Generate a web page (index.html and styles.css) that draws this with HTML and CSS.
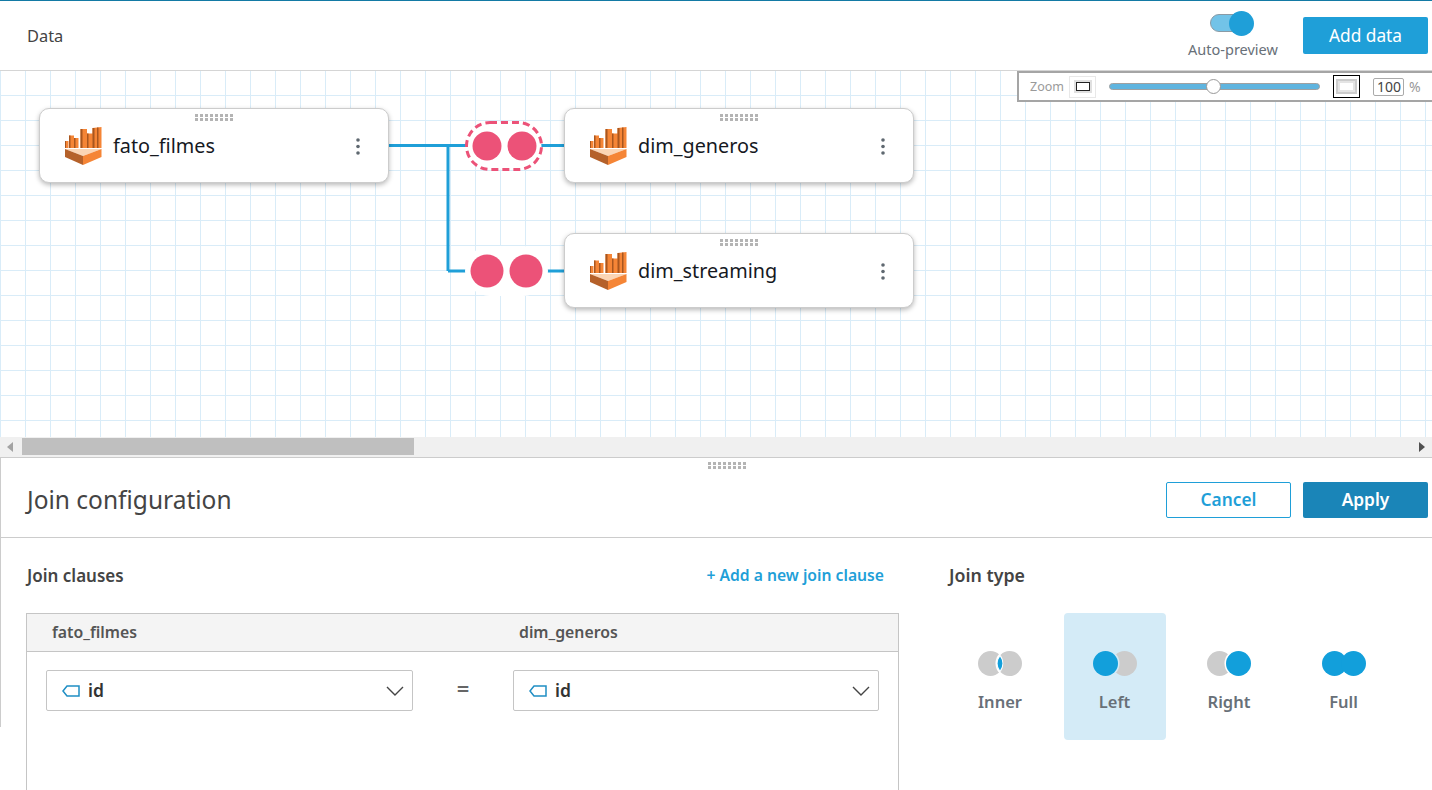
FILE: index.html
```html
<!DOCTYPE html>
<html lang="en">
<head>
  <meta charset="UTF-8" />
  <title>Data - Join configuration</title>
  <link rel="stylesheet" href="styles.css">
</head>
<body>
  <!-- shared icons -->
  <svg class="defs" width="0" height="0">
    <symbol id="cube" viewBox="0 0 37 38">
      <path fill="#f58536" d="M0 14h3.500v7H0zM4 8.500h5V21H4zM9 11h4.500v10H9zM15.500 2H22v19h-6.500zM22 6.500h5.500V21H22zM27.500 1l9-1v21h-9z"/>
      <path fill="#a8561f" d="M0 14h1v7H0zM4 8.500h1.500V21H4zM9 11h1.500v10H9zM15.500 2h2v19h-2zM22 6.500h1.500V21H22zM27.500 1h2v20h-2zM32 .5h1.500V21H32z"/>
      <path fill="#fbd5b5" d="M0 22h36.500L18 29z"/>
      <path fill="#b5612a" d="M0 22v8l18 8v-9z"/>
      <path fill="#f58536" d="M36.500 22v8L18 38v-9z"/>
    </symbol>
    <symbol id="kebab" viewBox="0 0 4 17">
      <circle cx="2" cy="2" r="1.800"/><circle cx="2" cy="8.500" r="1.800"/><circle cx="2" cy="15" r="1.800"/>
    </symbol>
    <symbol id="chevron" viewBox="0 0 18 10">
      <path d="M1 1l8 8 8-8" fill="none" stroke="#444" stroke-width="1.400"/>
    </symbol>
    <symbol id="tag" viewBox="0 0 18 12">
      <path d="M17 1H5L1 6l4 5h12z" fill="none" stroke="#1f8ec4" stroke-width="1.500"/>
    </symbol>
  </svg>

  <header class="top-bar">
    <span class="top-title">Data</span>
    <div class="auto-preview">
      <span class="toggle"><span class="toggle-knob"></span></span>
      <span class="toggle-label">Auto-preview</span>
    </div>
    <button class="btn btn-primary">Add data</button>
  </header>

  <section class="canvas">
    <svg class="links" width="1432" height="367" viewBox="0 70 1432 367">
      <path d="M388 145.500H565M448 145.500V271M448 271H565" fill="none" stroke="#1f9fd8" stroke-width="3"/>
      <rect x="466.500" y="122.500" width="75" height="47" rx="23.500" fill="#fff" stroke="#ec5278" stroke-width="3" stroke-dasharray="7 4"/>
      <circle cx="487" cy="146" r="14.500" fill="#ec5278"/>
      <circle cx="522" cy="146" r="14.500" fill="#ec5278"/>
      <rect x="465" y="246" width="83" height="50" rx="25" fill="#fff"/>
      <circle cx="487" cy="271" r="16.500" fill="#ec5278"/>
      <circle cx="526" cy="271" r="16.500" fill="#ec5278"/>
    </svg>

    <div class="node node-fato">
      <span class="grip"></span>
      <svg class="node-icon"><use href="#cube"/></svg>
      <span class="node-name">fato_filmes</span>
      <svg class="kebab"><use href="#kebab"/></svg>
    </div>
    <div class="node node-generos">
      <span class="grip"></span>
      <svg class="node-icon"><use href="#cube"/></svg>
      <span class="node-name">dim_generos</span>
      <svg class="kebab"><use href="#kebab"/></svg>
    </div>
    <div class="node node-streaming">
      <span class="grip"></span>
      <svg class="node-icon"><use href="#cube"/></svg>
      <span class="node-name">dim_streaming</span>
      <svg class="kebab"><use href="#kebab"/></svg>
    </div>

    <div class="zoom-box">
      <span class="zoom-label">Zoom</span>
      <span class="zoom-small"><span></span></span>
      <span class="slider"><span class="slider-knob"></span></span>
      <span class="zoom-large"><span></span></span>
      <span class="zoom-input">100</span>
      <span class="zoom-pct">%</span>
    </div>
  </section>

  <div class="scrollbar">
    <span class="arrow-left"></span>
    <span class="thumb"></span>
    <span class="arrow-right"></span>
  </div>

  <section class="panel">
    <span class="grip panel-grip"></span>
    <div class="panel-head">
      <h1>Join configuration</h1>
      <div class="panel-actions">
        <button class="btn btn-outline">Cancel</button>
        <button class="btn btn-apply">Apply</button>
      </div>
    </div>
    <div class="panel-body">
      <div class="clauses">
        <div class="clauses-head">
          <h2>Join clauses</h2>
          <a class="add-clause">+ Add a new join clause</a>
        </div>
        <div class="clause-table">
          <div class="clause-cols">
            <span>fato_filmes</span>
            <span>dim_generos</span>
          </div>
          <div class="clause-row">
            <div class="field">
              <svg class="tag"><use href="#tag"/></svg>
              <span class="field-value">id</span>
              <svg class="chevron"><use href="#chevron"/></svg>
            </div>
            <span class="equals">=</span>
            <div class="field">
              <svg class="tag"><use href="#tag"/></svg>
              <span class="field-value">id</span>
              <svg class="chevron"><use href="#chevron"/></svg>
            </div>
          </div>
        </div>
      </div>
      <div class="join-type">
        <h2>Join type</h2>
        <div class="types">
          <div class="type">
            <svg class="venn" viewBox="0 0 44 25">
              <circle cx="12.500" cy="12.500" r="12.500" fill="#ccc"/>
              <circle cx="31.500" cy="12.500" r="14" fill="#fff"/>
              <circle cx="31.500" cy="12.500" r="12.500" fill="#ccc"/>
              <path d="M22 3.500a14 14 0 0 1 0 18 14 14 0 0 1 0-18z" fill="#fff"/>
              <path d="M22 5.500a11.500 11.500 0 0 1 0 14 11.500 11.500 0 0 1 0-14z" fill="#129fdb"/>
            </svg>
            <span>Inner</span>
          </div>
          <div class="type type-on">
            <svg class="venn" viewBox="0 0 44 25">
              <circle cx="31.500" cy="12.500" r="12.500" fill="#ccc"/>
              <circle cx="12.500" cy="12.500" r="14" fill="#d4ebf7"/>
              <circle cx="12.500" cy="12.500" r="12.500" fill="#129fdb"/>
            </svg>
            <span>Left</span>
          </div>
          <div class="type">
            <svg class="venn" viewBox="0 0 44 25">
              <circle cx="12.500" cy="12.500" r="12.500" fill="#ccc"/>
              <circle cx="31.500" cy="12.500" r="14" fill="#fff"/>
              <circle cx="31.500" cy="12.500" r="12.500" fill="#129fdb"/>
            </svg>
            <span>Right</span>
          </div>
          <div class="type">
            <svg class="venn" viewBox="0 0 44 25">
              <circle cx="12.500" cy="12.500" r="12.500" fill="#129fdb"/>
              <circle cx="31.500" cy="12.500" r="12.500" fill="#129fdb"/>
            </svg>
            <span>Full</span>
          </div>
        </div>
      </div>
    </div>
  </section>
</body>
</html>
```
FILE: styles.css
```css
* { box-sizing: border-box; margin: 0; padding: 0; }
body {
  font-family: 'Noto Sans', 'Open Sans', sans-serif;
  background: #fff;
  color: #444;
  height: 790px;
  overflow: hidden;
}
.defs { position: absolute; }
.top-bar {
  height: 70px;
  border-top: 1px solid #137aa5;
  display: flex;
  align-items: center;
  padding: 0 4px 0 27px;
}
.top-title {
  font-size: 16.400px;
  color: #444;
  flex: 1;
}
.auto-preview {
  display: flex;
  flex-direction: column;
  align-items: center;
  width: 92px;
  margin-right: 24px;
  margin-top: 2px;
}
.toggle {
  display: block;
  position: relative;
  width: 36px;
  height: 18px;
  margin-right: 10px;
  border-radius: 9px;
  background: #72c3e8;
  border: 1px solid #8a9aa5;
}
.toggle-knob {
  position: absolute;
  right: -9px;
  top: -4.500px;
  width: 25px;
  height: 25px;
  border-radius: 50%;
  background: #1f9fd8;
}
.toggle-label {
  font-size: 14.500px;
  color: #687078;
  margin-top: 7px;
  white-space: nowrap;
}
.btn {
  font-family: inherit;
  font-size: 17.300px;
  width: 125px;
  height: 37px;
  border-radius: 2px;
  border: none;
  cursor: pointer;
}
.btn-primary {
  background: #1f9fd8;
  color: #fff;
}
.btn-outline {
  background: #fff;
  color: #1f9fd8;
  border: 1px solid #1f9fd8;
  font-weight: 600;
}
.btn-apply {
  background: #1a85b8;
  color: #fff;
  font-weight: 600;
}

/* canvas */
.canvas {
  position: relative;
  height: 367px;
  background-color: #fff;
  background-image:
    linear-gradient(to right, #d9ecf8 1px, transparent 1px),
    linear-gradient(to bottom, #d9ecf8 1px, transparent 1px);
  background-size: 25px 25px;
  border-top: 1px solid #d5d5d5;
  background-position: 0 -1px;
  overflow: hidden;
}
.links {
  position: absolute;
  left: 0;
  top: -1px;
}
.node {
  position: absolute;
  left: 39px;
  width: 350px;
  height: 75px;
  background: #fff;
  border: 1px solid #ccc;
  border-radius: 10px;
  box-shadow: 0 2px 5px rgba(0, 0, 0, 0.28);
  display: flex;
  align-items: center;
  padding: 1px 28px 0 25px;
}
.node-fato { top: 37px; }
.node-generos { top: 37px; left: 564px; }
.node-streaming { top: 162px; left: 564px; }
.grip {
  position: absolute;
  left: 155px;
  top: 5px;
  width: 39px;
  height: 7px;
  background-image: radial-gradient(circle at 1.500px 1.500px, #b4b4b4 1.500px, transparent 1.700px);
  background-size: 5px 4px;
}
.node-icon {
  width: 37px;
  height: 38px;
  flex: none;
}
.node-name {
  font-size: 19.800px;
  color: #16191f;
  margin-left: 11px;
  flex: 1;
  padding-bottom: 2px;
}
.kebab {
  width: 4px;
  height: 17px;
  fill: #5f6870;
}

/* zoom box */
.zoom-box {
  position: absolute;
  left: 1017px;
  top: 0;
  width: 430px;
  height: 31px;
  background: #fff;
  border: 2px solid #a5a5a5;
  display: flex;
  align-items: center;
  padding-left: 11px;
}
.zoom-label {
  font-size: 12.500px;
  color: #9a9a9a;
  width: 39px;
}
.zoom-small {
  width: 27px;
  height: 22px;
  border: 1px solid #e8e8e8;
  display: flex;
  align-items: center;
  justify-content: center;
}
.zoom-small span {
  width: 14px;
  height: 9px;
  border: 1.500px solid #222;
  outline: 2px solid #e0e0e0;
}
.slider {
  position: relative;
  width: 211px;
  height: 7px;
  margin-left: 13px;
  background: #5fb4df;
  border: 1px solid #a0a0a0;
  border-radius: 4px;
}
.slider-knob {
  position: absolute;
  left: 96px;
  top: -5.500px;
  width: 15px;
  height: 15px;
  border-radius: 50%;
  background: #fff;
  border: 1px solid #999;
}
.zoom-large {
  width: 27px;
  height: 23px;
  margin-left: 13px;
  border: 1px solid #000;
  display: flex;
  align-items: center;
  justify-content: center;
}
.zoom-large span {
  width: 17px;
  height: 11px;
  border: 2px solid #e4e4e4;
  outline: 2px solid #ccc;
}
.zoom-input {
  width: 31px;
  height: 18px;
  margin-left: 13px;
  border: 1px solid #aaa;
  border-radius: 2px;
  font-size: 14px;
  color: #444;
  text-align: right;
  line-height: 16px;
  padding-right: 2px;
}
.zoom-pct {
  font-size: 14px;
  color: #999;
  margin-left: 5px;
}

/* scrollbar under the canvas */
.scrollbar {
  height: 20px;
  background: #f0f0f0;
  position: relative;
  display: flex;
  align-items: center;
  justify-content: space-between;
  padding: 0 7px;
}
.arrow-left {
  border: 5px solid transparent;
  border-left: none;
  border-right: 6px solid #a3a3a3;
}
.arrow-right {
  border: 5px solid transparent;
  border-right: none;
  border-left: 6px solid #505050;
}
.thumb {
  position: absolute;
  left: 22px;
  top: 1px;
  width: 392px;
  height: 17px;
  background: #bfbfbf;
}

/* join panel */
.panel {
  position: relative;
  height: 270px;
  border-top: 1px solid #ccc;
  border-left: 1px solid #ccc;
}
.panel-grip {
  left: 707px;
  top: 4px;
}
.panel-head {
  height: 80px;
  border-bottom: 1px solid #ccc;
  margin-left: -1px;
  display: flex;
  align-items: center;
  justify-content: space-between;
  padding: 4px 4px 0 27px;
}
.panel-head h1 {
  font-size: 24.500px;
  font-weight: 400;
  color: #444;
}
.panel-actions {
  display: flex;
  gap: 12px;
}
.panel-actions .btn { height: 36px; }
.panel-body {
  display: flex;
  padding: 25px 0 0 25px;
}
.panel-body h2 {
  font-size: 17px;
  font-weight: 600;
  color: #444;
}
.clauses { width: 873px; }
.clauses h2 { margin-left: 1px; }
.clauses-head {
  display: flex;
  justify-content: space-between;
  align-items: center;
  height: 24px;
  padding-right: 15px;
}
.add-clause {
  font-size: 15.700px;
  font-weight: 600;
  color: #1f9fd8;
}
.clause-table {
  margin-top: 26px;
  height: 300px;
  border: 1px solid #c5c5c5;
}
.clause-cols {
  height: 38px;
  background: #f4f4f4;
  border-bottom: 1px solid #c5c5c5;
  display: grid;
  grid-template-columns: 467px 1fr;
  align-items: center;
  padding: 0 0 2px 25px;
  font-size: 15.800px;
  font-weight: 600;
  color: #555;
}
.clause-row {
  display: grid;
  grid-template-columns: 367px 100px 366px;
  align-items: center;
  padding: 18px 0 0 19px;
}
.field {
  height: 41px;
  border: 1px solid #c5c5c5;
  border-radius: 2px;
  display: flex;
  align-items: center;
  padding: 0 8px 0 15px;
}
.tag {
  width: 18px;
  height: 12px;
  flex: none;
}
.field-value {
  font-size: 17.500px;
  font-weight: 600;
  color: #333;
  margin-left: 8px;
  flex: 1;
  padding-bottom: 2px;
}
.chevron {
  width: 18px;
  height: 10px;
}
.equals {
  text-align: center;
  font-size: 22px;
  font-weight: 600;
  color: #666;
  padding-bottom: 6px;
}
.join-type {
  margin-left: 50px;
}
.join-type h2 {
  height: 24px;
  line-height: 24px;
  font-size: 17.800px;
}
.types {
  display: flex;
  gap: 12.500px;
  margin-top: 26px;
}
.type {
  width: 102px;
  height: 127px;
  border-radius: 4px;
  display: flex;
  flex-direction: column;
  align-items: center;
  padding-top: 38px;
  font-size: 16.500px;
  font-weight: 600;
  color: #687078;
}
.type-on { background: #d4ebf7; }
.venn {
  width: 44px;
  height: 25px;
  margin-bottom: 14px;
}
```
